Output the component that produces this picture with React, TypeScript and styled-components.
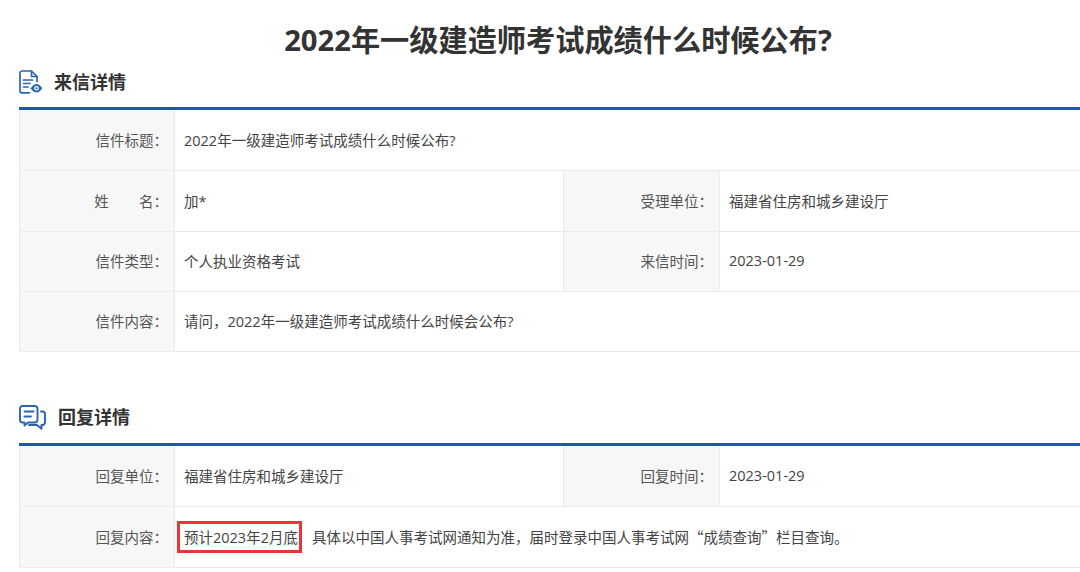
import React from "react";
import styled, { createGlobalStyle } from "styled-components";

const Global = createGlobalStyle`
  html, body { margin: 0; padding: 0; background: #fff; }
  body { width: 1080px; height: 572px; overflow: hidden; font-family: "Open Sans", "Noto Sans CJK SC", sans-serif; color: #444; }
`;

const Page = styled.div`
  width: 1080px;
  height: 572px;
  overflow: hidden;
  padding-left: 19px;
  box-sizing: border-box;
`;

const Title = styled.h1`
  margin: 0 0 0 -19px;
  padding: 19px 0 0 36px;
  width: 1080px;
  box-sizing: border-box;
  height: 62px;
  line-height: 43px;
  font-size: 29.2px;
  font-weight: 700;
  text-align: center;
  color: #333;
`;

const SectionHead = styled.div<{ $gap: number; $height: number; $bottom: number }>`
  display: flex;
  align-items: center;
  gap: ${(p) => p.$gap}px;
  height: ${(p) => p.$height}px;
  padding-bottom: ${(p) => p.$bottom}px;
  box-sizing: border-box;
  h2 {
    margin: 0;
    font-size: 18px;
    font-weight: 700;
    color: #333;
    line-height: 26px;
  }
`;

const Table = styled.div<{ $mb?: number }>`
  width: 1100px;
  border-top: 3px solid #1f5ba3;
  margin-bottom: ${(p) => p.$mb ?? 0}px;
`;

const Row = styled.div<{ $h: number }>`
  display: grid;
  grid-template-columns: 156px 388px 157px 1fr;
  height: ${(p) => p.$h}px;
  box-sizing: border-box;
  border-bottom: 1px solid #ebebeb;
  font-size: 14.5px;
`;

const Label = styled.div`
  display: flex;
  align-items: center;
  justify-content: flex-end;
  background: #f7f7f7;
  border-left: 1px solid #ebebeb;
  border-right: 1px solid #ebebeb;
  padding: 0 6px 2px 0;
  color: #555;
  white-space: pre;
`;

const Value = styled.div<{ $span?: boolean }>`
  display: flex;
  align-items: center;
  padding: 0 0 2px 9px;
  color: #444;
  white-space: pre;
  ${(p) => (p.$span ? "grid-column: 2 / -1;" : "")}
`;

const Mark = styled.span`
  display: inline-flex;
  align-items: center;
  box-sizing: border-box;
  height: 32px;
  margin: 1px 10px 0 -7px;
  padding: 0 1px 1px 4px;
  border: 3px solid #ee3338;
`;

const Quote = styled.span`
  font-family: "Noto Sans CJK SC", sans-serif;
`;

const DocIcon = () => (
  <svg width="24" height="24" viewBox="0 0 24 24" fill="none" stroke="#2a66ab" strokeWidth="1.7" strokeLinecap="round" strokeLinejoin="round">
    <path d="M10.500 22.800H3A2 2 0 0 1 1 20.800V3A2 2 0 0 1 3 1h9.500L18 6.500v5" />
    <path d="M12.500 1.200V6.500H18" />
    <path d="M4.500 10h9M4.500 13.500h6.500M4.500 17h4.500" />
    <path d="M12.300 18.300c1.400-2.500 3-3.700 5.200-3.700s3.800 1.200 5.200 3.700c-1.400 2.500-3 3.700-5.200 3.700s-3.800-1.200-5.200-3.700z" fill="#2a66ab" stroke="#2a66ab" strokeWidth="1" />
    <circle cx="17.500" cy="18.300" r="2.300" fill="#fff" stroke="none" />
    <circle cx="17.500" cy="18.300" r="1.100" fill="#2a66ab" stroke="none" />
  </svg>
);

const ChatIcon = () => (
  <svg width="27" height="25" viewBox="0 0 27 25" fill="none" stroke="#2a66ab" strokeWidth="1.900" strokeLinecap="round" strokeLinejoin="round">
    <path d="M3.500 1H15.500A3 3 0 0 1 18.500 4V14.500A3 3 0 0 1 15.500 17.500H9L5.500 20.500V17.500H3.500A2.500 2.500 0 0 1 1 15V3.500A2.500 2.500 0 0 1 3.500 1z" />
    <path d="M5.500 6.500h9M5.500 11.500h6.500" />
    <path d="M22 6.500h1.500A2.500 2.500 0 0 1 26 9V17.500A2.500 2.500 0 0 1 23.500 20H22.500V23.800L18 20H10" />
  </svg>
);

export default function App() {
  return (
    <>
      <Global />
      <Page>
        <Title>2022年一级建造师考试成绩什么时候公布?</Title>
        <SectionHead $gap={11} $height={45} $bottom={5}>
          <DocIcon />
          <h2>来信详情</h2>
        </SectionHead>
        <Table $mb={52}>
          <Row $h={61}>
            <Label>信件标题：</Label>
            <Value $span>2022年一级建造师考试成绩什么时候公布?</Value>
          </Row>
          <Row $h={61}>
            <Label>{"姓        名："}</Label>
            <Value>加*</Value>
            <Label>受理单位：</Label>
            <Value>福建省住房和城乡建设厅</Value>
          </Row>
          <Row $h={60}>
            <Label>信件类型：</Label>
            <Value>个人执业资格考试</Value>
            <Label>来信时间：</Label>
            <Value>2023-01-29</Value>
          </Row>
          <Row $h={60}>
            <Label>信件内容：</Label>
            <Value $span>请问，2022年一级建造师考试成绩什么时候会公布?</Value>
          </Row>
        </Table>
        <SectionHead $gap={12} $height={39} $bottom={13}>
          <ChatIcon />
          <h2>回复详情</h2>
        </SectionHead>
        <Table>
          <Row $h={61}>
            <Label>回复单位：</Label>
            <Value>福建省住房和城乡建设厅</Value>
            <Label>回复时间：</Label>
            <Value>2023-01-29</Value>
          </Row>
          <Row $h={61}>
            <Label>回复内容：</Label>
            <Value $span>
              <Mark>预计2023年2月底</Mark>
              <span>
                具体以中国人事考试网通知为准，届时登录中国人事考试网<Quote>“</Quote>成绩查询<Quote>”</Quote>栏目查询。
              </span>
            </Value>
          </Row>
        </Table>
      </Page>
    </>
  );
}
